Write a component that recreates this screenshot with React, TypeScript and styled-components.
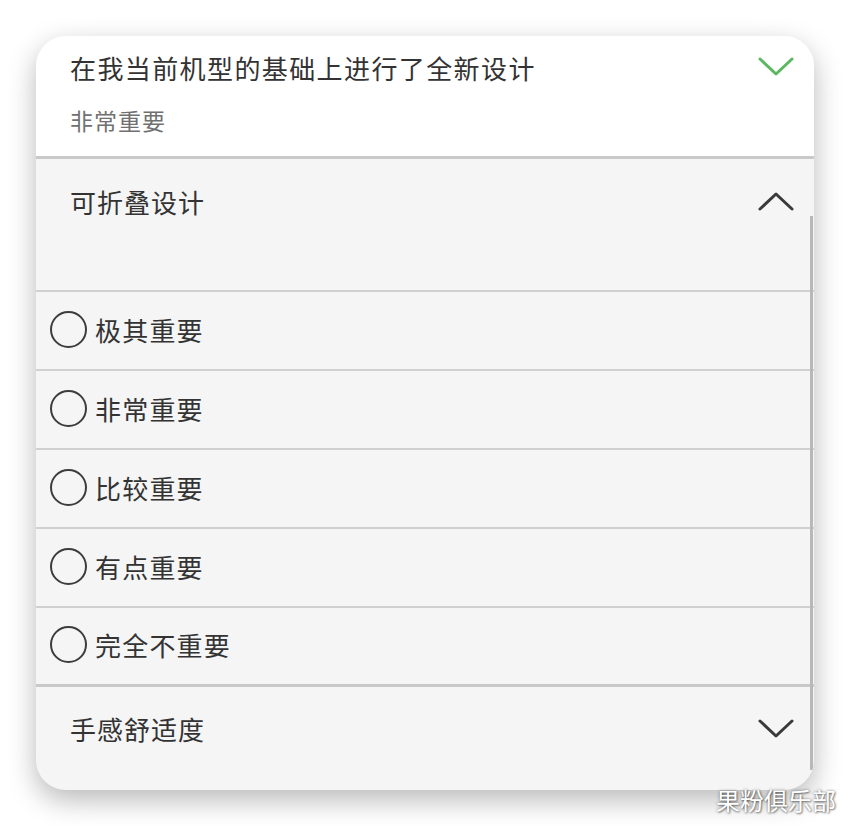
import styled, {createGlobalStyle} from "styled-components";

const GlobalStyle = createGlobalStyle`
    html, body {
        margin: 0;
        padding: 0;
        background: #ffffff;
    }
    body {
        font-family: "Noto Sans CJK SC", "Noto Sans", sans-serif;
    }
`

const options = ["极其重要", "非常重要", "比较重要", "有点重要", "完全不重要"];

const Chevron = ({up, color}: {up?: boolean; color: string}) => (
    <svg width="36" height="20" viewBox="0 0 36 20">
        <polyline
            points={up ? "2,18 18,3 34,18" : "2,2 18,17 34,2"}
            fill="none"
            stroke={color}
            strokeWidth="3"
            strokeLinecap="round"
            strokeLinejoin="round"
        />
    </svg>
);

export default function App() {
    return (
        <Page>
            <GlobalStyle/>
            <Card>
                <Answered>
                    <TitleRow>
                        <Title>在我当前机型的基础上进行了全新设计</Title>
                        <Chevron color={"#5cb860"}/>
                    </TitleRow>
                    <Subtitle>非常重要</Subtitle>
                </Answered>
                <Section>
                    <SectionHeader>
                        <SectionTitle>可折叠设计</SectionTitle>
                        <Chevron up color={"#3a3a3a"}/>
                    </SectionHeader>
                    <OptionList>
                        {options.map((o) => (
                            <Option key={o}>
                                <Radio/>
                                <OptionLabel>{o}</OptionLabel>
                            </Option>
                        ))}
                    </OptionList>
                    <BottomHeader>
                        <SectionTitle>手感舒适度</SectionTitle>
                        <Chevron color={"#3a3a3a"}/>
                    </BottomHeader>
                </Section>
                <Scrollbar/>
            </Card>
            <Watermark>果粉俱乐部</Watermark>
        </Page>
    );
}

const Page = styled.div`
    position: relative;
    width: 850px;
    height: 826px;
    padding: 36px 0 0 36px;
    box-sizing: border-box;
    overflow: hidden;
`
const Card = styled.div`
    position: relative;
    width: 778px;
    height: 754px;
    border-radius: 30px;
    overflow: hidden;
    background: #f5f5f5;
    box-shadow: 0 10px 28px rgba(0, 0, 0, 0.28);
    display: flex;
    flex-direction: column;
`
const Answered = styled.div`
    background: #ffffff;
    height: 123px;
    flex-shrink: 0;
    padding: 0 20px 0 34px;
    box-sizing: border-box;
    border-bottom: 3px solid #c9c9c9;
`
const TitleRow = styled.div`
    display: flex;
    align-items: center;
    justify-content: space-between;
    height: 62px;
`
const Title = styled.div`
    font-size: 26px;
    color: #333333;
    letter-spacing: 1.4px;
`
const Subtitle = styled.div`
    font-size: 23px;
    color: #707070;
    margin-top: 5px;
    letter-spacing: 1px;
`
const Section = styled.div`
    flex: 1;
    display: flex;
    flex-direction: column;
`
const SectionHeader = styled.div`
    display: flex;
    align-items: center;
    justify-content: space-between;
    height: 133px;
    padding: 0 20px 47px 34px;
    box-sizing: border-box;
    border-bottom: 2px solid #d0d0d0;
`
const SectionTitle = styled.div`
    font-size: 26px;
    color: #333333;
    letter-spacing: 1px;
`
const OptionList = styled.div`
    display: flex;
    flex-direction: column;
`
const Option = styled.div`
    display: flex;
    align-items: center;
    gap: 8px;
    height: 79px;
    padding: 0 0 3px 14px;
    box-sizing: border-box;
    border-bottom: 2px solid #d0d0d0;

    &:last-child {
        border-bottom: 3px solid #c9c9c9;
    }
`
const Radio = styled.span`
    width: 33px;
    height: 33px;
    border-radius: 50%;
    border: 2px solid #3d3d3d;
    flex-shrink: 0;
`
const OptionLabel = styled.span`
    font-size: 26px;
    color: #333333;
    letter-spacing: 1.2px;
`
const BottomHeader = styled.div`
    display: flex;
    align-items: center;
    justify-content: space-between;
    height: 88px;
    padding: 0 20px 5px 34px;
    box-sizing: border-box;
`
const Scrollbar = styled.div`
    position: absolute;
    right: 1px;
    top: 180px;
    bottom: 20px;
    width: 3px;
    background: #b8b8b8;
`
const Watermark = styled.div`
    position: absolute;
    left: 716px;
    top: 782px;
    font-size: 24px;
    color: #ffffff;
    text-shadow: 0 0 3px rgba(0, 0, 0, 0.5), 1px 1px 2px rgba(0, 0, 0, 0.4);
`
